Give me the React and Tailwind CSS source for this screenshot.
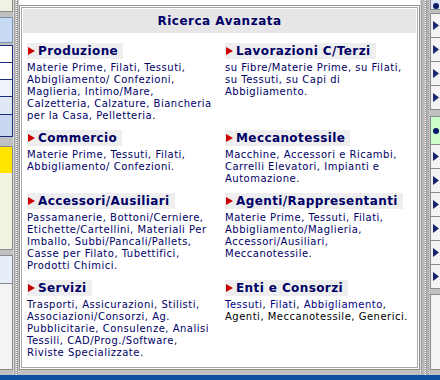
import React from 'react';

const font = { fontFamily: '"DejaVu Sans", Verdana, sans-serif' };

const sections = [
  [
    {
      title: 'Produzione',
      lines: [
        'Materie Prime, Filati, Tessuti,',
        'Abbigliamento/ Confezioni,',
        'Maglieria, Intimo/Mare,',
        'Calzetteria, Calzature, Biancheria',
        'per la Casa, Pelletteria.',
      ],
    },
    {
      title: 'Lavorazioni C/Terzi',
      lines: ['su Fibre/Materie Prime, su Filati,', 'su Tessuti, su Capi di', 'Abbigliamento.'],
    },
  ],
  [
    {
      title: 'Commercio',
      lines: ['Materie Prime, Tessuti, Filati,', 'Abbigliamento/ Confezioni.'],
    },
    {
      title: 'Meccanotessile',
      lines: ['Macchine, Accessori e Ricambi,', 'Carrelli Elevatori, Impianti e', 'Automazione.'],
    },
  ],
  [
    {
      title: 'Accessori/Ausiliari',
      lines: [
        'Passamanerie, Bottoni/Cerniere,',
        'Etichette/Cartellini, Materiali Per',
        'Imballo, Subbi/Pancali/Pallets,',
        'Casse per Filato, Tubettifici,',
        'Prodotti Chimici.',
      ],
    },
    {
      title: 'Agenti/Rappresentanti',
      lines: [
        'Materie Prime, Tessuti, Filati,',
        'Abbigliamento/Maglieria,',
        'Accessori/Ausiliari,',
        'Meccanotessile.',
      ],
    },
  ],
  [
    {
      title: 'Servizi',
      lines: [
        'Trasporti, Assicurazioni, Stilisti,',
        'Associazioni/Consorzi, Ag.',
        'Pubblicitarie, Consulenze, Analisi',
        'Tessili, CAD/Prog./Software,',
        'Riviste Specializzate.',
      ],
    },
    { title: 'Enti e Consorzi', enti: true },
  ],
];

function Heading({ title }) {
  return (
    <div className="flex">
      <div className="flex items-center h-[16px] bg-[#eeeeee] pl-[1px] pr-[5px]">
        <svg width="7" height="8" viewBox="0 0 7 8" className="mr-[3px]">
          <path d="M0 0 L7 4 L0 8 Z" fill="#cc0000" />
        </svg>
        <span className="text-[12px] font-bold tracking-[0.4px] text-[#000066] leading-none whitespace-nowrap">
          {title}
        </span>
      </div>
    </div>
  );
}

function Cell({ item }) {
  return (
    <div>
      <Heading title={item.title} />
      <div className="mt-[3px] text-[10px] leading-[12px] tracking-[0.5px] text-[#000066] whitespace-nowrap">
        {item.enti ? (
          <>
            <div>
              <span className="text-[#000080]">Tessuti</span>
              <span className="text-black">, </span>
              <span className="text-[#000080]">Filati</span>
              <span className="text-black">, </span>
              <span className="text-[#000080]">Abbigliamento</span>
              <span className="text-black">,</span>
            </div>
            <div className="text-black">Agenti, Meccanotessile, Generici.</div>
          </>
        ) : (
          item.lines.map((l) => <div key={l}>{l}</div>)
        )}
      </div>
    </div>
  );
}

function Separator({ wide }) {
  return (
    <div className="flex h-full shrink-0">
      <div className="w-[1px] bg-[#d8d8d8]" />
      <div className="w-[1px] bg-[#a4a4a4]" />
      {wide && <div className="w-[2px] bg-[#b8b8b8]" />}
      <div className="w-[1px] bg-[#c4c4c4]" />
      <div className="w-[1px] bg-[repeating-linear-gradient(to_bottom,#ffffff_0_1px,#9a9a9a_1px_2px)]" />
      <div className="w-[1px] bg-[#a4a4a4]" />
      {wide && <div className="w-[2px] bg-[#b0b0b0]" />}
      <div className="w-[1px] bg-[#c8c8c8]" />
    </div>
  );
}

function Arrow() {
  return (
    <svg width="6" height="9" viewBox="0 0 6 9">
      <path d="M0 0 L6 4.5 L0 9 Z" fill="#1a2470" />
    </svg>
  );
}

function Dot() {
  return <div className="w-[6px] h-[6px] rounded-full bg-[#0a1a6a]" />;
}

function LeftColumn() {
  return (
    <div className="w-[13px] shrink-0 flex flex-col bg-[#c0c0c0]">
      <div className="h-[12px] bg-[#f2f2e4] border-r border-b border-[#8a8a8a]" />
      <div className="h-[5px]" />
      <div className="h-[26px] bg-[#c6daf4] border-r border-y border-[#8090b0]" />
      <div className="h-[2px]" />
      <div className="h-[92px] flex flex-col border-r border-y border-[#1a2a80] bg-[#e4ecf8]">
        <div className="h-[17px] border-b border-[#1a2a80] bg-[#ffffff]" />
        <div className="h-[17px] border-b border-[#1a2a80] bg-[#ffffff]" />
        <div className="h-[17px] border-b border-[#1a2a80] bg-[#eef2fa]" />
        <div className="h-[18px] border-b border-[#1a2a80] bg-[#e0e8f6]" />
        <div className="flex-1 bg-[#c8d8f2]" />
      </div>
      <div className="h-[9px]" />
      <div className="h-[27px] bg-[#ffe400] border-r border-t border-[#8a8a8a]" />
      <div className="h-[77px] bg-[#f2f2e2] border-r border-b border-[#8a8a8a]" />
      <div className="h-[5px]" />
      <div className="h-[29px] bg-[#e6eefa] border-r border-y border-[#8a8a8a]" />
      <div className="h-[86px] bg-[#f4f4f4] border-r border-b border-[#8a8a8a]" />
      <div className="flex-1" />
    </div>
  );
}

function RightColumn() {
  const row = 'h-[24px] flex items-center pl-[2px] border-b border-[#8a8a8a] bg-[#f4f4f4]';
  return (
    <div className="w-[10px] shrink-0 flex flex-col bg-[#c0c0c0]">
      <div className="h-[10px] flex items-end pl-[2px] bg-[#dce6f6] border-l border-b border-[#8a8a8a]">
        <Dot />
      </div>
      <div className="h-[3px]" />
      <div className="flex flex-col border-l border-t border-[#8a8a8a]">
        {[0, 1, 2, 3].map((i) => (
          <div key={i} className={row}>
            <Arrow />
          </div>
        ))}
      </div>
      <div className="h-[6px]" />
      <div className="h-[29px] flex items-center pl-[2px] bg-[#ccffcc] border-l border-y border-[#8a8a8a]">
        <Dot />
      </div>
      <div className="flex flex-col border-l border-[#8a8a8a]">
        {[0, 1, 2, 3, 4, 5].map((i) => (
          <div key={i} className={row}>
            <Arrow />
          </div>
        ))}
      </div>
      <div className="h-[5px]" />
      <div className="h-[76px] bg-[#f4f4f4] border-l border-y border-[#8a8a8a]" />
      <div className="flex-1" />
    </div>
  );
}

function MainPanel() {
  return (
    <div className="w-[401px] shrink-0 flex flex-col bg-[#c0c0c0]">
      <div className="h-[5px] bg-white" />
      <div className="h-[365px] border border-[#909090] bg-white p-[1px]">
        <div className="h-full border border-[#a8a8a8] bg-white p-[1px] flex flex-col">
          <div className="h-[24px] bg-[#e6e6e6] flex items-center justify-center">
            <span className="text-[12px] font-bold tracking-[0.5px] text-[#000066] leading-none">
              Ricerca Avanzata
            </span>
          </div>
          <div className="pt-[10px] pl-[4px] grid grid-cols-[198px_1fr] gap-y-[8px]">
            {sections.map((r, i) => (
              <React.Fragment key={i}>
                <Cell item={r[0]} />
                <Cell item={r[1]} />
              </React.Fragment>
            ))}
          </div>
        </div>
      </div>
    </div>
  );
}

export default function App() {
  return (
    <div className="w-[440px] h-[380px] overflow-hidden flex flex-col bg-[#c0c0c0]" style={font}>
      <div className="h-[375px] flex">
        <LeftColumn />
        <Separator />
        <MainPanel />
        <Separator wide />
        <RightColumn />
      </div>
      <div className="h-[5px] bg-[#0b4f9f]" />
    </div>
  );
}
